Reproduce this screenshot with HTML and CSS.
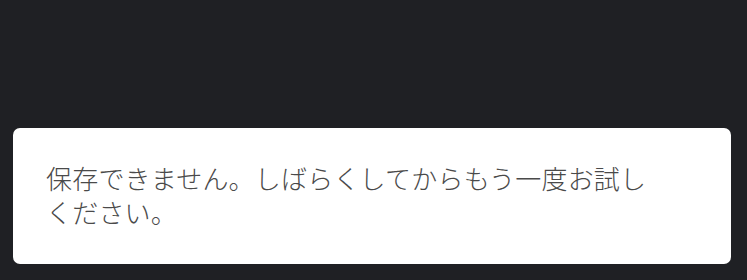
FILE: index.html
```html
<!DOCTYPE html>
<html lang="ja">
<head>
  <meta charset="UTF-8">
  <meta name="viewport" content="width=device-width, initial-scale=1.0">
  <title>保存エラー</title>
  <link rel="stylesheet" href="styles.css">
</head>
<body>
  <div class="screen">
    <div class="toast">
      <p class="toast-text">保存できません。しばらくしてからもう一度お試しください。</p>
    </div>
  </div>
</body>
</html>
```

FILE: styles.css
```css
html, body {
  margin: 0;
  padding: 0;
  height: 100%;
  background-color: #1f2024;
}
.screen {
  height: 280px;
  box-sizing: border-box;
  display: flex;
  flex-direction: column;
  justify-content: flex-end;
  padding: 0 16px 16px 13px;
}
.toast {
  background-color: #ffffff;
  border-radius: 7px;
  padding: 33px 33px 35px 33px;
  height: 136px;
  box-sizing: border-box;
}
.toast-text {
  margin: 0;
  max-width: 615px;
  font-family: "Noto Sans CJK JP", "Noto Sans", sans-serif;
  font-size: 26px;
  font-weight: 300;
  letter-spacing: 0.2px;
  line-height: 34px;
  color: #4a4a4a;
}
```
